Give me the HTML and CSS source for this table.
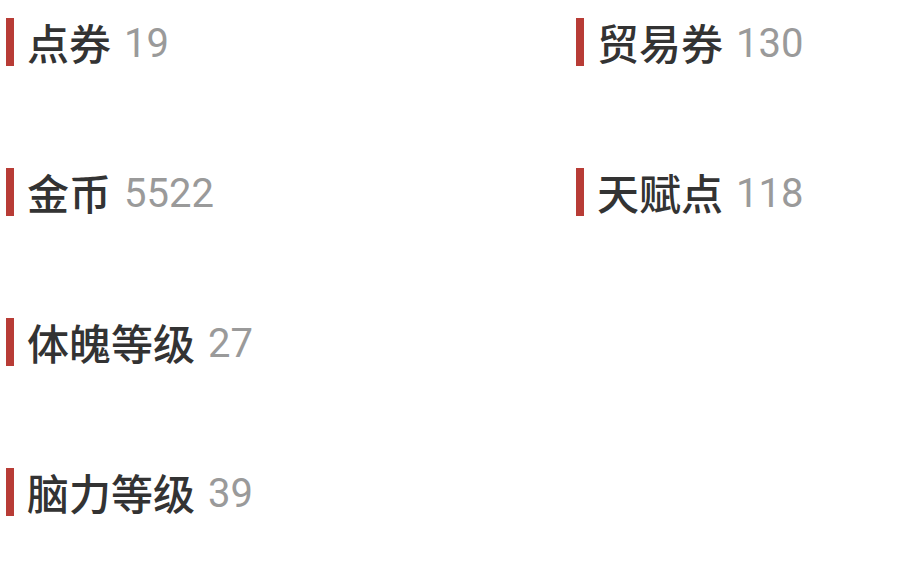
FILE: index.html
```html
<!DOCTYPE html>
<html lang="zh-CN">
<head>
<meta charset="utf-8">
<link rel="stylesheet" href="styles.css">
</head>
<body>
<div class="stats">
  <div class="item"><span class="bar"></span><span class="label">点券</span><span class="value">19</span></div>
  <div class="item"><span class="bar"></span><span class="label">贸易券</span><span class="value">130</span></div>
  <div class="item"><span class="bar"></span><span class="label">金币</span><span class="value">5522</span></div>
  <div class="item"><span class="bar"></span><span class="label">天赋点</span><span class="value">118</span></div>
  <div class="item"><span class="bar"></span><span class="label">体魄等级</span><span class="value">27</span></div>
  <div class="item"></div>
  <div class="item"><span class="bar"></span><span class="label">脑力等级</span><span class="value">39</span></div>
</div>
</body>
</html>
```
FILE: styles.css
```css
html, body {
  margin: 0;
  padding: 0;
  background: #ffffff;
}
.stats {
  display: grid;
  grid-template-columns: 570px 1fr;
  row-gap: 102px;
  padding: 18px 0 0 6px;
}
.item {
  display: flex;
  align-items: center;
  height: 48px;
}
.bar {
  width: 8px;
  height: 48px;
  background: #b83c36;
  margin-right: 13px;
  flex: none;
}
.label {
  font-family: "Noto Sans CJK SC", sans-serif;
  font-weight: 500;
  font-size: 42px;
  color: #333333;
  line-height: 48px;
}
.value {
  font-family: Roboto, "Noto Sans CJK SC", sans-serif;
  font-weight: 400;
  font-size: 40px;
  color: #9a9a9a;
  margin-left: 13px;
  line-height: 48px;
  padding-top: 4px;
}
```
